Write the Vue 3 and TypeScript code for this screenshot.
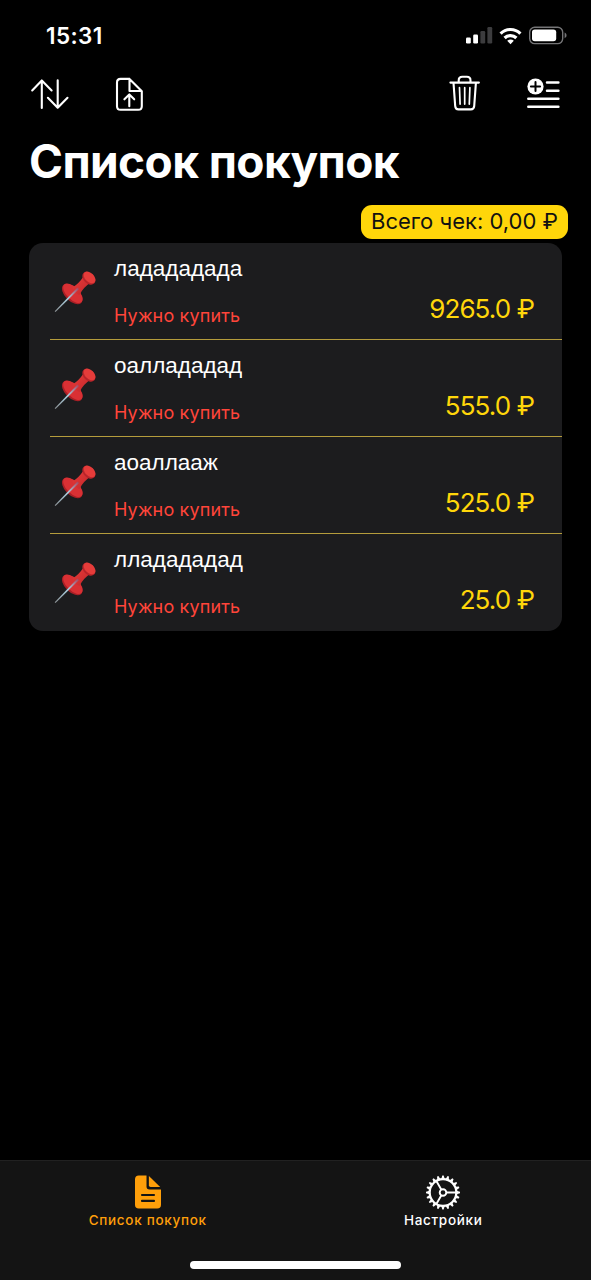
<script setup lang="ts">
interface Item {
  name: string
  price: string
}

const items: Item[] = [
  { name: 'ладададада', price: '9265.0 ₽' },
  { name: 'оаллададад', price: '555.0 ₽' },
  { name: 'аоаллааж', price: '525.0 ₽' },
  { name: 'лладададад', price: '25.0 ₽' },
]

const teeth: number[] = Array.from({ length: 20 }, (_, i) => i * 18)
</script>

<template>
  <main class="screen">
    <svg class="defs" width="0" height="0">
      <defs>
        <linearGradient id="needle" x1="0" y1="1" x2="1" y2="0">
          <stop offset="0" stop-color="#8d9194" />
          <stop offset=".55" stop-color="#a9cfe0" />
          <stop offset="1" stop-color="#a5405a" />
        </linearGradient>
        <linearGradient id="neck" x1="0" y1="0" x2="1" y2="1">
          <stop offset="0" stop-color="#e83c3a" />
          <stop offset="1" stop-color="#c0262a" />
        </linearGradient>
      </defs>
    </svg>

    <header class="status">
      <span class="time">15:31</span>
      <svg class="indicators" width="104" height="22" viewBox="464 25 104 22">
        <g fill="#fff">
          <rect x="466" y="37.5" width="4.8" height="6" rx="1.2" />
          <rect x="473.2" y="34.5" width="4.8" height="9" rx="1.2" />
        </g>
        <g fill="#3c3c3e">
          <rect x="480.4" y="31" width="4.8" height="12.5" rx="1.2" />
          <rect x="487.4" y="27" width="4.8" height="16.5" rx="1.2" />
        </g>
        <g fill="none" stroke="#fff" stroke-width="3.2">
          <path d="M500.6 33.6a14 14 0 0 1 19.8 0" />
          <path d="M504.6 38a8.3 8.3 0 0 1 11.8 0" />
        </g>
        <path d="M507.2 40.8a4.7 4.7 0 0 1 6.6 0l-3.3 3.4z" fill="#fff" />
        <rect x="529.7" y="27.2" width="33" height="16.4" rx="5" fill="none" stroke="#747476" stroke-width="1.4" />
        <rect x="532" y="29.5" width="24.2" height="11.8" rx="2.8" fill="#fff" />
        <path d="M564.6 32.6c2.6 1 2.6 4.6 0 5.6z" fill="#747476" />
      </svg>
    </header>

    <nav class="toolbar">
      <svg class="sort" width="40" height="40" viewBox="30 74 40 40">
        <path d="M41.8 108V80.6M32.2 90.4l9.6-10 9.8 10M57.700 80.400v27.400M47.900 97.800l9.800 10 9.800-10" />
      </svg>
      <svg class="upload" width="30" height="40" viewBox="115 74 30 40">
        <path d="M129.200 78.900h-8.600q-3.600 0-3.600 3.600v23.700q0 3.600 3.600 3.600h17.600q3.600 0 3.600-3.600V91.200L129.500 78.900V91h12.100M129.300 106.200V94.800M124.400 99.300l4.900-4.900 4.900 4.900" />
      </svg>
      <svg class="trash" width="34" height="40" viewBox="448 74 34 40">
        <path d="M450.400 82.600h28.500M458.700 82.400v-2q0-3.600 3.600-3.600h4.600q3.600 0 3.600 3.600v2M453.500 82.800l1.700 23.400q.3 3.200 3.300 3.200h12.400q3 0 3.300-3.200l1.700-23.400" />
        <path class="thin" d="M459.500 87.700l.6 16.400M464.700 87.700v16.400M469.900 87.700l-.6 16.400" />
      </svg>
      <svg class="add" width="36" height="40" viewBox="526 74 36 40">
        <circle cx="535.500" cy="86.500" r="8.100" fill="#fff" stroke="none" />
        <path class="plus" d="M530.900 86.500h9.200M535.500 81.900v9.200" />
        <path class="bars" d="M547 82.600h11.400M547 90.700h11.400M528.300 98.700h30.100M528.300 106.700h30.100" />
      </svg>
    </nav>

    <h1>Список покупок</h1>

    <div class="total"><span>Всего чек: 0,00 ₽</span></div>

    <ul class="card">
      <li v-for="item in items" :key="item.name" class="row">
        <svg class="pin" width="44" height="44" viewBox="0 0 44 44">
          <ellipse cx="19.200" cy="25" rx="12.700" ry="7" transform="rotate(45 19.200 25)" fill="#a91f26" />
          <ellipse cx="19.900" cy="24.200" rx="12.300" ry="6.200" transform="rotate(45 19.900 24.200)" fill="#d93034" />
          <path d="M19.500 18.500Q26 14.500 30.500 7.500L37 14Q30 18.500 26.500 26Q21.500 24.500 19.500 18.500z" fill="url(#neck)" />
          <ellipse cx="35.800" cy="9.300" rx="7.500" ry="5.200" transform="rotate(45 35.800 9.300)" fill="#b8242a" />
          <ellipse cx="36.600" cy="8.400" rx="7" ry="4.500" transform="rotate(45 36.600 8.400)" fill="#e53c3a" />
          <path d="M1.700 42.300L24.500 18.600l1.500 1.500L2.500 43z" fill="url(#needle)" />
        </svg>
        <div class="info">
          <span class="name">{{ item.name }}</span>
          <span class="need">Нужно купить</span>
        </div>
        <span class="price">{{ item.price }}</span>
      </li>
    </ul>

    <footer class="tabs">
      <div class="tab active">
        <svg width="36" height="36" viewBox="0 0 36 36">
          <path d="M16.500 1.500H8.800Q5 1.500 5 5.300v25.400q0 3.800 3.800 3.800h18.400q3.800 0 3.800-3.800V15.500H19.500q-3 0-3-3z" fill="#ff9f0a" />
          <path d="M18.900 2v9.300q0 1.700 1.700 1.700H30.200z" fill="#ff9f0a" />
          <path d="M12 21h12M12 26.900h12" stroke="#141414" stroke-width="2.100" stroke-linecap="round" />
        </svg>
        <span class="label">Список покупок</span>
      </div>
      <div class="tab">
        <svg width="36" height="36" viewBox="-18 -18.500 36 36">
          <g fill="none" stroke="#fff" stroke-width="2.200">
            <circle r="13.300" />
            <circle r="3.300" stroke-width="1.900" />
            <path d="M3.500 0H13M-1.750-3.030L-6.500-11.260M-1.750 3.030L-6.500 11.260" stroke-width="1.900" />
          </g>
          <path v-for="a in teeth" :key="a" d="M13.500-1.700L17-.7V.7L13.500 1.700z" :transform="`rotate(${a})`" fill="#fff" />
        </svg>
        <span class="label">Настройки</span>
      </div>
      <i class="home"></i>
    </footer>
  </main>
</template>

<style>
body {
  margin: 0;
  background: #000;
}
</style>

<style scoped>
.screen {
  width: 591px;
  height: 1280px;
  display: flex;
  flex-direction: column;
  background: #000;
  color: #fff;
  font-family: Inter, Roboto, sans-serif;
  overflow: hidden;
}
.defs {
  display: block;
  flex: none;
}
.status {
  height: 74px;
  box-sizing: border-box;
  padding: 25px 23px 0 46px;
  display: flex;
  justify-content: space-between;
  flex: none;
}
.time {
  font-size: 22.5px;
  line-height: 22px;
  font-weight: 600;
  letter-spacing: 0.4px;
}
.toolbar {
  height: 40px;
  flex: none;
  display: flex;
  padding: 0 29px 0 30px;
}
.toolbar svg {
  fill: none;
  stroke: #fff;
  stroke-width: 2.1;
  stroke-linecap: round;
  stroke-linejoin: round;
}
.upload {
  margin-left: 45px;
}
.trash {
  margin-left: auto;
}
.add {
  margin-left: 44px;
}
.toolbar .thin {
  stroke-width: 1.7;
}
.toolbar .plus {
  stroke: #000;
  stroke-width: 2;
}
.toolbar .bars {
  stroke-width: 2.5;
}
h1 {
  margin: 19px 0 0 29px;
  height: 57px;
  line-height: 56px;
  font-size: 46px;
  font-weight: 700;
  letter-spacing: -0.6px;
  white-space: nowrap;
  flex: none;
}
.total {
  align-self: flex-end;
  width: 207px;
  height: 34px;
  margin: 14.5px 23px 4.5px 0;
  border-radius: 11px;
  background: #ffd60a;
  color: #111;
  font-size: 22px;
  line-height: 33px;
  text-align: center;
  white-space: nowrap;
  flex: none;
}
.card {
  list-style: none;
  margin: 0 29px;
  padding: 0;
  height: 388px;
  border-radius: 14px;
  background: #1c1c1e;
  flex: none;
}
.row {
  height: 97px;
  box-sizing: border-box;
  margin-left: 21px;
  padding: 0 28px 0 3px;
  display: flex;
  border-bottom: 1px solid #b59c3c;
}
.row:last-child {
  border-bottom-color: transparent;
}
.pin {
  margin-top: 26px;
  flex: none;
}
.info {
  margin-left: 17px;
  display: flex;
  flex-direction: column;
}
.name {
  margin-top: 12px;
  height: 28px;
  line-height: 28px;
  font-family: "Liberation Sans", sans-serif;
  font-size: 22.5px;
}
.need {
  margin-top: 22px;
  height: 22px;
  line-height: 22px;
  font-size: 18px;
  letter-spacing: 0.15px;
  color: #ff453a;
}
.price {
  margin: 50px 0 0 auto;
  height: 32px;
  line-height: 32px;
  font-size: 26px;
  letter-spacing: -0.9px;
  color: #ffd60a;
}
.tabs {
  margin-top: auto;
  height: 120px;
  box-sizing: border-box;
  border-top: 1px solid #212121;
  background: #141414;
  display: flex;
  position: relative;
  flex: none;
}
.tab {
  flex: 1;
  display: flex;
  flex-direction: column;
  align-items: center;
  padding-top: 13px;
}
.label {
  font-size: 13.5px;
  line-height: 18px;
  font-weight: 500;
  letter-spacing: 0.7px;
  margin-top: 1px;
}
.active {
  color: #ff9f0a;
}
.home {
  position: absolute;
  left: 190px;
  bottom: 11px;
  width: 211px;
  height: 8px;
  border-radius: 4px;
  background: #fff;
}
</style>
